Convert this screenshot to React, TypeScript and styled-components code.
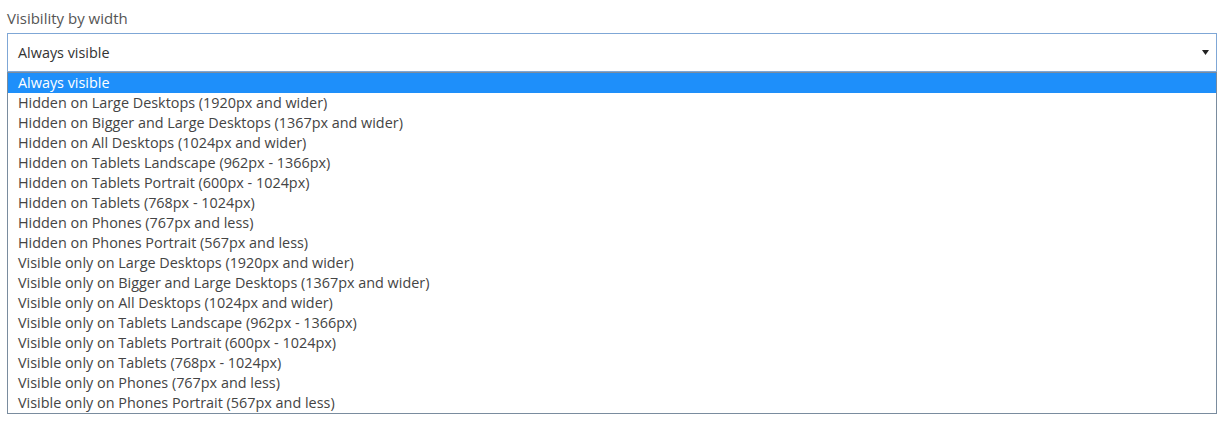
import React from 'react';
import styled, { createGlobalStyle } from 'styled-components';

const GlobalStyle = createGlobalStyle`
  html, body {
    margin: 0;
    padding: 0;
    background: #ffffff;
    font-family: "Open Sans", "Liberation Sans", sans-serif;
  }
`;

const Field = styled.div`
  padding: 8px 0 0 7px;
  width: 1210px;
`;

const Label = styled.div`
  font-size: 15px;
  line-height: 20px;
  color: #555555;
  margin-bottom: 5px;
`;

const SelectBox = styled.div`
  box-sizing: border-box;
  height: 39px;
  border: 1px solid #7fa7d6;
  display: flex;
  align-items: center;
  justify-content: space-between;
  padding: 0 7px 0 10px;
  font-size: 14.4px;
  color: #333333;
`;

const Arrow = styled.svg`
  width: 7px;
  height: 5px;
  display: block;
`;

const List = styled.ul`
  box-sizing: border-box;
  list-style: none;
  margin: 0;
  padding: 0;
  border: 1px solid #7a8c9e;
`;

const Option = styled.li<{ $selected?: boolean }>`
  height: 20px;
  line-height: 20px;
  padding-left: 10px;
  font-size: 14.4px;
  white-space: nowrap;
  color: ${p => (p.$selected ? '#ffffff' : '#444444')};
  background: ${p => (p.$selected ? '#1e8ffa' : 'transparent')};
`;

const options = [
  'Always visible',
  'Hidden on Large Desktops (1920px and wider)',
  'Hidden on Bigger and Large Desktops (1367px and wider)',
  'Hidden on All Desktops (1024px and wider)',
  'Hidden on Tablets Landscape (962px - 1366px)',
  'Hidden on Tablets Portrait (600px - 1024px)',
  'Hidden on Tablets (768px - 1024px)',
  'Hidden on Phones (767px and less)',
  'Hidden on Phones Portrait (567px and less)',
  'Visible only on Large Desktops (1920px and wider)',
  'Visible only on Bigger and Large Desktops (1367px and wider)',
  'Visible only on All Desktops (1024px and wider)',
  'Visible only on Tablets Landscape (962px - 1366px)',
  'Visible only on Tablets Portrait (600px - 1024px)',
  'Visible only on Tablets (768px - 1024px)',
  'Visible only on Phones (767px and less)',
  'Visible only on Phones Portrait (567px and less)',
];

export default function App() {
  const selected = 0;
  return (
    <>
      <GlobalStyle />
      <Field>
        <Label>Visibility by width</Label>
        <SelectBox>
          <span>{options[selected]}</span>
          <Arrow viewBox="0 0 7 5">
            <path d="M0 0 H7 L3.5 5 Z" fill="#222" />
          </Arrow>
        </SelectBox>
        <List>
          {options.map((o, i) => (
            <Option key={o} $selected={i === selected}>
              {o}
            </Option>
          ))}
        </List>
      </Field>
    </>
  );
}
